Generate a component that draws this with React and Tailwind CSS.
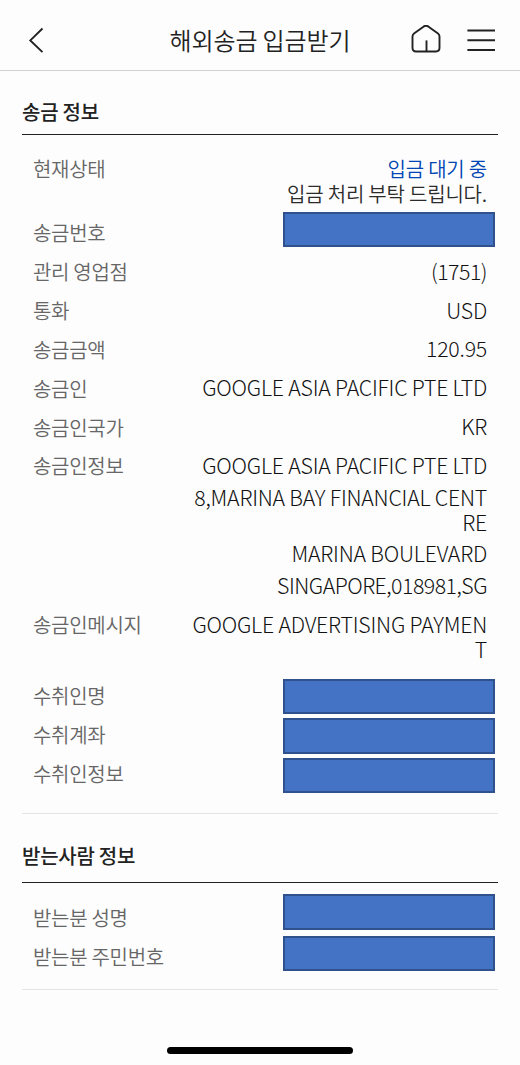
import React from 'react';

const Hidden = ({ className = 'h-[35px]' }) => (
  <div className={`w-[212px] border-2 border-[#2f528f] bg-[#4472c4] ${className}`}></div>
);

const Row = ({ label, className = 'mt-[13.9px]', labelClass = '', children }) => (
  <div className={`flex justify-between items-start ${className}`}>
    <span className={`shrink-0 whitespace-nowrap text-[20px] leading-[25px] tracking-[-0.3px] text-[#666] ${labelClass}`}>
      {label}
    </span>
    {children}
  </div>
);

const Value = ({ children }) => (
  <div className="flex flex-col gap-[6.7px] -mt-[1.4px] pb-[1.4px] pr-2 text-right whitespace-nowrap font-light text-[21.3px] leading-[25px] tracking-[-0.22px] text-[#111]">
    {children}
  </div>
);

const SectionTitle = ({ children, className }) => (
  <h2 className={`border-b border-[#222] text-[20px] leading-[28px] font-medium tracking-[-0.25px] text-[#222] ${className}`}>
    {children}
  </h2>
);

const App = () => {
  return (
    <div className="flex flex-col w-[520px] h-[1065px] overflow-hidden bg-[#fdfdfd] font-['Noto_Sans_CJK_KR',sans-serif] font-[350]">
      {/* 상단 헤더 */}
      <header className="grid grid-cols-[1fr_auto_1fr] items-center h-[71px] shrink-0 pt-[10px] border-b border-[#d2d2d2]">
        <button className="ml-[28px] w-4">
          <svg className="w-4 h-[26px]" viewBox="0 0 16 26" fill="none" stroke="#222" strokeWidth="1.9">
            <path d="M14.5 1.5L2.3 13.4l12.2 11.7" />
          </svg>
        </button>
        <h1 className="text-[24px] leading-[30px] tracking-[-0.1px] text-[#222]">해외송금 입금받기</h1>
        <div className="flex items-center justify-end gap-[26px] pr-[25px]">
          <svg className="w-[30px] h-[30px]" viewBox="0 0 30 30" fill="none" stroke="#222" strokeWidth="1.9" strokeLinejoin="round">
            <path d="M12.8 1.4Q15 0 17.2 1.4L27 8.6Q28.5 9.7 28.5 11.6V22.8Q28.5 26.5 25 26.5H5Q1.5 26.5 1.5 22.8V11.6Q1.5 9.7 3 8.6Z" />
            <path d="M15.5 26.5V15.4" />
          </svg>
          <svg className="w-[28px] h-[24px]" viewBox="0 0 28 24" stroke="#222" strokeWidth="1.9">
            <path d="M0.4 2.5h27.6M0.4 12.3h27.6M0.4 22h27.6" />
          </svg>
        </div>
      </header>

      <main className="flex-1 px-[22px]">
        {/* 송금 정보 */}
        <section className="h-[743px] border-b border-[#e3e3e3]">
          <SectionTitle className="h-[64px] pt-[27px]">송금 정보</SectionTitle>
          <div className="pl-[11px] pr-[3px]">
            <Row label="현재상태" className="mt-[21px]">
              <div className="pr-2 text-right text-[20px] leading-[25px] tracking-[-0.2px] text-[#2b2b2b]">
                <p className="text-[#0046b4]">입금 대기 중</p>
                <p>입금 처리 부탁 드립니다.</p>
              </div>
            </Row>
            <Row label="송금번호" className="mt-[6px]" labelClass="pt-2">
              <Hidden />
            </Row>
            <Row label="관리 영업점" className="mt-[12px]"><Value><p className="tracking-[-0.5px]">(1751)</p></Value></Row>
            <Row label="통화"><Value>USD</Value></Row>
            <Row label="송금금액"><Value>120.95</Value></Row>
            <Row label="송금인"><Value>GOOGLE ASIA PACIFIC PTE LTD</Value></Row>
            <Row label="송금인국가"><Value>KR</Value></Row>
            <Row label="송금인정보">
              <Value>
                <p>GOOGLE ASIA PACIFIC PTE LTD</p>
                <p>8,MARINA BAY FINANCIAL CENT<br />RE</p>
                <p>MARINA BOULEVARD</p>
                <p className="tracking-[-0.5px]">SINGAPORE,018981,SG</p>
              </Value>
            </Row>
            <Row label="송금인메시지">
              <Value><p>GOOGLE ADVERTISING PAYMEN<br />T</p></Value>
            </Row>
            <Row label="수취인명" className="mt-[16.5px]" labelClass="pt-1"><Hidden /></Row>
            <Row label="수취계좌" className="mt-[4px]" labelClass="pt-1"><Hidden className="h-[36px]" /></Row>
            <Row label="수취인정보" className="mt-[4px]" labelClass="pt-[3px]"><Hidden /></Row>
          </div>
        </section>

        {/* 받는사람 정보 */}
        <section className="h-[176px] border-b border-[#e3e3e3]">
          <SectionTitle className="h-[69px] pt-[28px]">받는사람 정보</SectionTitle>
          <div className="pl-[11px] pr-[3px]">
            <Row label="받는분 성명" className="mt-[11px]" labelClass="pt-[11px]"><Hidden className="h-[36px]" /></Row>
            <Row label="받는분 주민번호" className="mt-[6px]" labelClass="pt-2"><Hidden /></Row>
          </div>
        </section>
      </main>

      {/* 홈 인디케이터 */}
      <div className="self-center w-[186px] h-[7px] mb-[11px] shrink-0 rounded-full bg-black"></div>
    </div>
  );
};

export default App;
